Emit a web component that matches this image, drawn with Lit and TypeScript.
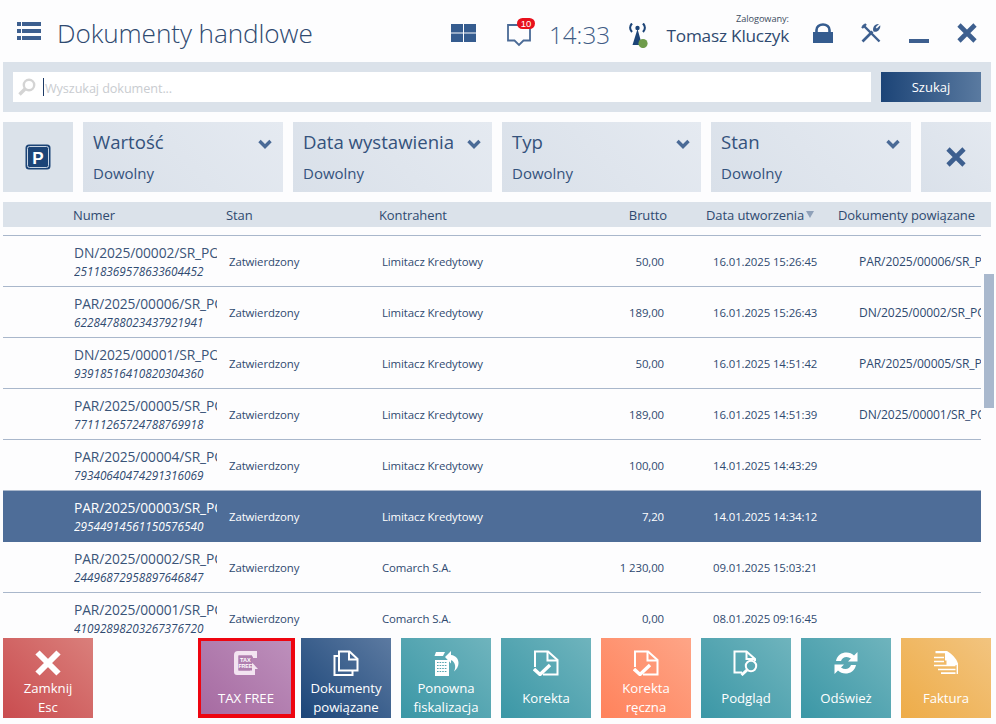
import { LitElement, html, css, svg } from "lit";
import { customElement } from "lit/decorators.js";

const rows = [
  ["DN/2025/00002/SR_POS1", "25118369578633604452", "Limitacz Kredytowy", "50,00", "16.01.2025 15:26:45", "PAR/2025/00006/SR_POS1"],
  ["PAR/2025/00006/SR_POS1", "62284788023437921941", "Limitacz Kredytowy", "189,00", "16.01.2025 15:26:43", "DN/2025/00002/SR_POS1"],
  ["DN/2025/00001/SR_POS1", "93918516410820304360", "Limitacz Kredytowy", "50,00", "16.01.2025 14:51:42", "PAR/2025/00005/SR_POS1"],
  ["PAR/2025/00005/SR_POS1", "77111265724788769918", "Limitacz Kredytowy", "189,00", "16.01.2025 14:51:39", "DN/2025/00001/SR_POS1"],
  ["PAR/2025/00004/SR_POS1", "79340640474291316069", "Limitacz Kredytowy", "100,00", "14.01.2025 14:43:29", ""],
  ["PAR/2025/00003/SR_POS1", "29544914561150576540", "Limitacz Kredytowy", "7,20", "14.01.2025 14:34:12", ""],
  ["PAR/2025/00002/SR_POS1", "24496872958897646847", "Comarch S.A.", "1 230,00", "09.01.2025 15:03:21", ""],
  ["PAR/2025/00001/SR_POS1", "41092898203267376720", "Comarch S.A.", "0,00", "08.01.2025 09:16:45", ""],
];

const filters = ["Wartość", "Data wystawienia", "Typ", "Stan"];

const ic = (w: number, h: number, body: unknown) =>
  html`<svg width=${w} height=${h} viewBox="0 0 ${w} ${h}">${body}</svg>`;

const chevron = ic(14, 10, svg`<path d="M1.5 2 L7 7.5 L12.5 2" fill="none" stroke="#4a6a96" stroke-width="3.4"/>`);
const cross = (c: string, w = 20) =>
  ic(w, w, svg`<path d="M2 2 L${w - 2} ${w - 2} M${w - 2} 2 L2 ${w - 2}" stroke=${c} stroke-width="4.6" fill="none"/>`);

const W = "#fff";
const docIcon = (extra: unknown) =>
  ic(26, 26, svg`<path d="M2 17V1.5H15L24.5 10V24.5H10" fill="none" stroke=${W} stroke-width="2"/><path d="M14.5 1.5V10.5H24" fill="none" stroke=${W} stroke-width="2"/>${extra}`);
const checkDoc = docIcon(svg`<path d="M1 19 L7 24.5 L17 15" fill="none" stroke=${W} stroke-width="3.4"/>`);

const tileIcons: Record<string, unknown> = {
  close: ic(26, 26, svg`<path d="M2.5 2.5 L23.5 23.5 M23.5 2.5 L2.5 23.5" stroke=${W} stroke-width="6"/>`),
  tax: ic(26, 26, svg`<path d="M5 1H24V6.5H19V5.5H5.5V20.5H17V19H14L19.5 13L25 19H22V25H4Q1 25 1 22V5Q1 1 5 1Z" fill="#f3e4f1"/><path d="M20 1H24V8H20Z" fill="#f3e4f1"/>
    <rect x="5.5" y="5.5" width="13.5" height="15" fill="#b07eaf"/>
    <text x="12.3" y="12" text-anchor="middle" font-family="Liberation Sans" font-size="5.6" font-weight="700" fill="#fff">TAX</text>
    <text x="12.3" y="18" text-anchor="middle" font-family="Liberation Sans" font-size="5.2" font-weight="700" fill="#fff">FREE</text>`),
  docs: ic(26, 26, svg`<path d="M6 20.5V1.5H16.5L24.5 9V20.5Z" fill="none" stroke=${W} stroke-width="2"/><path d="M16 1.5V9.5H24" fill="none" stroke=${W} stroke-width="2"/><path d="M6 6H1.5V25H19.5V20.5" fill="none" stroke=${W} stroke-width="2"/>`),
  fisk: ic(26, 26, svg`<path d="M3 2H12L10 6H1.5Z" fill=${W}/><rect x="2" y="10" width="14" height="16" fill=${W}/>
    <path d="M4 12.5H14M4 15.5H14M4 18.5H14M4 21.5H14" stroke="#55a5b0" stroke-width="1.2" stroke-dasharray="1.6 1"/>
    <path d="M12 7L18 1V5C23 5.5 25.5 9 25.5 13C25.5 16 24 19 21 21.5C22.5 18.5 22.5 15.5 21.5 13.5C20.5 11.5 19.5 10.5 18 10.3V13.5Z" fill=${W}/>`),
  korekta: checkDoc,
  podglad: ic(26, 26, svg`<path d="M9 22.5H1.5V1.5H13.5L22 9V11" fill="none" stroke=${W} stroke-width="2"/><path d="M13.5 1.5V9H22" fill="none" stroke=${W} stroke-width="2"/><circle cx="18" cy="16" r="5.2" fill="none" stroke=${W} stroke-width="2"/><path d="M14 20 L8.5 25" stroke=${W} stroke-width="3"/>`),
  refresh: ic(26, 26, svg`<path d="M3 11C4 5 9 2.5 13.5 2.5C16.5 2.5 19 3.5 21 5.5L24.5 2V11.5H15L18 8.5C16.5 7.5 15 7 13.5 7C11 7 9 8.5 8 11Z" fill=${W}/><path d="M23 15C22 21 17 23.5 12.5 23.5C9.5 23.5 7 22.5 5 20.5L1.5 24V14.5H11L8 17.5C9.5 18.5 11 19 12.5 19C15 19 17 17.5 18 15Z" fill=${W}/>`),
  faktura: ic(26, 26, svg`<path d="M2.5 1H14C19 4 23.5 8.5 25 13.5V24H23.6V15H13.5V10.5H12V3.2H2.5Z" fill=${W}/><path d="M1 7.5H11M1 11.5H11M1 15.5H22.5M5 19.5H22.5M8 23.2H22.5" stroke=${W} stroke-width="1.7"/>`),
};

const tiles = [
  ["tax", "TAX FREE", "purple marked"],
  ["docs", "Dokumenty|powiązane", "navy"],
  ["fisk", "Ponowna|fiskalizacja", "teal"],
  ["korekta", "Korekta", "teal"],
  ["korekta", "Korekta|ręczna", "orange"],
  ["podglad", "Podgląd", "teal"],
  ["refresh", "Odśwież", "teal"],
  ["faktura", "Faktura", "yellow"],
];

@customElement("app-root")
export class AppRoot extends LitElement {
  static styles = css`
    :host {
      display: flex;
      flex-direction: column;
      width: 996px;
      height: 724px;
      background: #fdfdfe;
      color: #2f4a70;
      font-family: "Open Sans", "Noto Sans", sans-serif;
      overflow: hidden;
    }
    svg { display: block; }
    .top { height: 62px; flex: none; display: flex; align-items: center; position: relative; }
    .menu { margin-left: 17px; }
    .title { margin-left: 16px; font-size: 26.2px; font-weight: 300; letter-spacing: -0.1px; color: #2f4a70; white-space: nowrap; width: 394px; line-height: 34px; margin-top: 4px; }
    .grid-ic { margin-top: 4px; }
    .bubble { position: relative; margin-left: 31px; margin-top: 7px; width: 24px; height: 24px; }
    .badge { position: absolute; left: 10px; top: -5px; width: 18px; height: 11px; border-radius: 6px; background: #e8101c; color: #fff; font-size: 9.5px; line-height: 11px; text-align: center; font-family: "Liberation Sans", sans-serif; }
    .time { margin-left: 18px; font-size: 24.2px; font-weight: 300; color: #3f5c85; width: 80px; line-height: 34px; margin-top: 8px; }
    .ant { margin-top: 8px; margin-right: 19px; }
    .user { width: 122px; display: flex; flex-direction: column; align-items: flex-end; margin-right: 24px; }
    .logged { font-size: 9.2px; line-height: 10px; color: #3c4c60; letter-spacing: -0.05px; }
    .name { font-size: 17.2px; line-height: 24px; white-space: nowrap; letter-spacing: -0.2px; color: #2f4a70; }
    .win { margin-right: 28px; margin-top: 4px; }
    .win.last { margin-right: 0; }

    .search { flex: none; height: 50px; margin: 0 5px 0 3px; background: #dbe2ea; display: flex; align-items: center; padding: 0 10px; gap: 10px; box-sizing: border-box; }
    .input { flex: 1; height: 30px; background: #fff; display: flex; align-items: center; padding-left: 5px; }
    .caret { width: 1px; height: 18px; background: #1d3a66; margin-left: 7px; }
    .ph { font-size: 12.7px; color: #c9ccd0; letter-spacing: -0.1px; margin-left: 1px; padding-top: 1px; }
    .btn { width: 100px; height: 30px; background: linear-gradient(90deg, #1c4477, #5a7aa0); color: #fff; font-size: 13px; display: flex; align-items: center; justify-content: center; }

    .filters { flex: none; height: 70px; margin: 10px 5px 10px 3px; display: grid; grid-template-columns: 70px 200px 199px 199px 200px 70px; gap: 10px; }
    .sq { background: #dbe2ea; display: flex; align-items: center; justify-content: center; }
    .sq.end { background: linear-gradient(45deg, #dae1ea, #e4e9f0); }
    .filter { background: linear-gradient(45deg, #d9e0e9, #e5eaf1); padding: 0 10px; display: flex; flex-direction: column; }
    .f-head { display: flex; justify-content: space-between; align-items: center; height: 38px; padding-right: 1px; margin-bottom: 2px; }
    .f-head svg { margin-top: 6px; }
    .f-name { font-size: 18.6px; color: #34527c; white-space: nowrap; }
    .f-val { font-size: 15px; line-height: 22px; color: #34527c; }

    .thead { flex: none; height: 25px; margin: 0 5px 0 3px; background: #dbe2ea; display: grid; grid-template-columns: 70px 153px 153px 150px 138px 39px 132px 1fr; align-items: center; font-size: 13px; color: #2f4a70; white-space: nowrap; letter-spacing: -0.1px; }
    .h-num { grid-column: 2; }
    .h-br { text-align: right; }
    .h-dt { grid-column: 7; }
    .sort { display: inline-block; width: 0; height: 0; border: 4.5px solid transparent; border-top: 7px solid #8fa1b9; border-bottom: 0; margin-left: 2px; vertical-align: 2px; }

    .body { flex: 1; min-height: 0; overflow: hidden; position: relative; padding-top: 8px; margin-left: 3px; }
    .list { width: 978px; border-top: 1px solid #a9b7cb; }
    .row { height: 51px; box-sizing: border-box; border-bottom: 1px solid #a9b7cb; display: grid; grid-template-columns: 71px 143px 12px 153px 140px 142px 49px 146px 122px; align-items: center; font-size: 11.4px; color: #2f4a70; white-space: nowrap; letter-spacing: -0.1px; }
    .row > div { grid-row: 1; }
    .row.sel { background: #4e6d98; color: #fff; border-bottom-color: #4e6d98; }
    .row.sel .no, .row.sel .ser { color: #fff; }
    .num { grid-column: 2; overflow: hidden; padding-top: 1px; }
    .no { font-size: 13.8px; line-height: 19px; color: #3a5478; letter-spacing: -0.1px; }
    .ser { font-size: 11.75px; line-height: 19px; font-style: italic; letter-spacing: 0; color: #2f4a70; }
    .stan { grid-column: 4; }
    .kon { grid-column: 5; }
    .br { grid-column: 6; text-align: right; }
    .dt { grid-column: 8; }
    .rel { grid-column: 9; overflow: hidden; font-size: 12.1px; }
    .scroll { position: absolute; right: 2px; top: 47px; width: 10px; height: 134px; background: #a9b8cd; }

    .foot { flex: none; height: 80px; margin: 0 5px 6px 3px; display: flex; gap: 10px; position: relative; }
    .gap { flex: 1; }
    .tile { width: 90px; flex: none; position: relative; display: flex; flex-direction: column; align-items: center; padding-top: 12px; box-sizing: border-box; color: #fff; }
    .icon { height: 26px; }
    .label { flex: 1; margin-top: 3px; display: flex; flex-direction: column; align-items: center; justify-content: center; font-size: 13.2px; line-height: 19px; white-space: nowrap; margin-bottom: 1px; letter-spacing: -0.05px; text-align: center; }
    .red { background: linear-gradient(45deg, #c94c4f, #da7f7b); }
    .purple { background: linear-gradient(45deg, #a66aa1, #bd90bc); }
    .navy { background: linear-gradient(45deg, #1c4679, #5c7aa1); }
    .teal { background: linear-gradient(45deg, #3b97a6, #6fb4bd); }
    .orange { background: linear-gradient(45deg, #ff825b, #fea587); }
    .yellow { background: linear-gradient(45deg, #eeac48, #f2c47f); }
    .marked::after { content: ""; position: absolute; left: -3px; right: -4px; top: 0; bottom: 0; border: solid #ee0510; border-width: 3px 4px 4px 3px; }
  `;

  render() {
    return html`
      <div class="top">
        <div class="menu">${ic(24, 18, svg`<g fill="#3d5f8f"><rect y="0" width="4" height="4"/><rect x="5" y="0" width="19" height="4"/><rect y="7" width="4" height="4"/><rect x="5" y="7" width="19" height="4"/><rect y="14" width="4" height="4"/><rect x="5" y="14" width="19" height="4"/></g>`)}</div>
        <div class="title">Dokumenty handlowe</div>
        <div class="grid-ic">${ic(25, 18, svg`<g fill="#355c8f"><rect width="12" height="8.5"/><rect x="13" width="12" height="8.5"/><rect y="9.5" width="12" height="8.5"/><rect x="13" y="9.5" width="12" height="8.5"/></g>`)}</div>
        <div class="bubble">
          ${ic(24, 24, svg`<path d="M1 2V17.5H7.5L12 22L16.5 17.5H23V2Z" fill="none" stroke="#4a6a96" stroke-width="1.8"/>`)}
          <div class="badge">10</div>
        </div>
        <div class="time">14:33</div>
        <div class="ant">${ic(19, 25, svg`<path d="M8.5 6L3.5 22H13Z" fill="#1c4477"/><circle cx="8.5" cy="5" r="2.2" fill="#1c4477"/><path d="M3 .5C.6 3 .6 6.5 3 9M14 .5C16.4 3 16.4 6.5 14 9" fill="none" stroke="#1c4477" stroke-width="2.2"/><circle cx="14" cy="20.5" r="4.6" fill="#6f9c4b"/>`)}</div>
        <div class="user"><div class="logged">Zalogowany:</div><div class="name">Tomasz Kluczyk</div></div>
        <div class="win">${ic(20, 20, svg`<rect x="0" y="9" width="20" height="11" fill="#355c8f"/><path d="M3.5 10V7A6.5 5.5 0 0 1 16.5 7V10" fill="none" stroke="#355c8f" stroke-width="2.6"/>`)}</div>
        <div class="win">${ic(20, 20, svg`<path d="M2 2L18.5 18.5" stroke="#3d5f8f" stroke-width="2.4"/><path d="M1 5L5 1" stroke="#3d5f8f" stroke-width="2.4"/><path d="M1.5 18.5L11.5 8.5" stroke="#3d5f8f" stroke-width="2.6"/><path d="M12.5 8.5C11 5 13.5 .5 18 1L14.7 4.3L15.8 5.5L19.2 2.3C20 6.5 16 10 12.5 8.5Z" fill="#3d5f8f"/>`)}</div>
        <div class="win">${ic(20, 20, svg`<rect x="0" y="16" width="20" height="4" fill="#3d5f8f"/>`)}</div>
        <div class="win last">${cross("#3d5f8f", 20)}</div>
      </div>

      <div class="search">
        <div class="input">
          ${ic(18, 18, svg`<circle cx="11" cy="7" r="5.2" fill="none" stroke="#d4d4d4" stroke-width="2.4"/><path d="M7 11L1.5 16.5" stroke="#d4d4d4" stroke-width="3.4"/>`)}
          <div class="caret"></div><div class="ph">Wyszukaj dokument...</div>
        </div>
        <div class="btn">Szukaj</div>
      </div>

      <div class="filters">
        <div class="sq">${ic(26, 26, svg`<rect x="0.5" y="0.5" width="25" height="25" rx="3.5" fill="#1c4477"/><rect x="2.5" y="2.5" width="21" height="21" rx="2" fill="#1c4477" stroke="#c9d5e3" stroke-width="1"/><text x="13" y="19.5" text-anchor="middle" font-family="Liberation Sans" font-weight="700" font-size="17" fill="#fff">P</text>`)}</div>
        ${filters.map(
          (f) => html`<div class="filter">
            <div class="f-head"><span class="f-name">${f}</span>${chevron}</div>
            <div class="f-val">Dowolny</div>
          </div>`
        )}
        <div class="sq end">${cross("#3d5f8f", 20)}</div>
      </div>

      <div class="thead">
        <span class="h-num">Numer</span>
        <span>Stan</span>
        <span>Kontrahent</span>
        <span class="h-br">Brutto</span>
        <span class="h-dt">Data utworzenia<i class="sort"></i></span>
        <span>Dokumenty powiązane</span>
      </div>

      <div class="body">
        <div class="list">
          ${rows.map(
            (r, i) => html`<div class="row ${i === 5 ? "sel" : ""}">
              <div class="num"><div class="no">${r[0]}</div><div class="ser">${r[1]}</div></div>
              <div class="stan">Zatwierdzony</div>
              <div class="kon">${r[2]}</div>
              <div class="br">${r[3]}</div>
              <div class="dt">${r[4]}</div>
              <div class="rel">${r[5]}</div>
            </div>`
          )}
        </div>
        <div class="scroll"></div>
      </div>

      <div class="foot">
        <div class="tile red"><div class="icon">${tileIcons.close}</div><div class="label"><span>Zamknij</span><span>Esc</span></div></div>
        <div class="gap"></div>
        ${tiles.map(
          ([k, l, c]) => html`<div class="tile ${c}"><div class="icon">${tileIcons[k]}</div><div class="label">${l.split("|").map((t) => html`<span>${t}</span>`)}</div></div>`
        )}
      </div>
    `;
  }
}
